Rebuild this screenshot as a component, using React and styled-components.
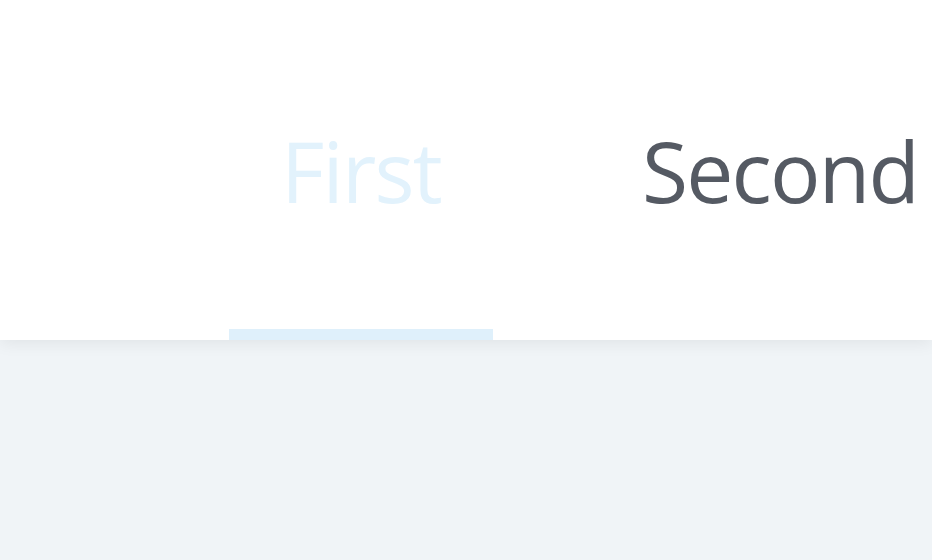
import React, { useState } from 'react';
import styled, { createGlobalStyle } from 'styled-components';

const GlobalStyle = createGlobalStyle`
  html, body {
    margin: 0;
    padding: 0;
    background: #f0f4f7;
    overflow: hidden;
  }
`;

const tabs = ['First', 'Second'];

const App = () => {
  const [active, setActive] = useState(0);

  return (
    <>
      <GlobalStyle />
      <Page>
        <Header>
          <TabList>
            {tabs.map((t, i) => (
              <Tab key={t} $active={i === active} onClick={() => setActive(i)}>
                {t}
              </Tab>
            ))}
          </TabList>
        </Header>
      </Page>
    </>
  );
};

export default App;

const Page = styled.div`
  width: 932px;
  height: 560px;
  background: #f0f4f7;
`;

const Header = styled.div`
  height: 340px;
  background: #ffffff;
  box-shadow: 0 3px 16px rgba(0, 0, 0, 0.07);
  position: relative;
  z-index: 1;
`;

const TabList = styled.div`
  display: flex;
  height: 100%;
  padding-left: 229px;
  gap: 97px;
  white-space: nowrap;
`;

const Tab = styled.button`
  display: flex;
  align-items: center;
  flex-shrink: 0;
  height: 100%;
  padding: 12px 52px 0;
  box-sizing: border-box;
  border: none;
  border-bottom: 11px solid ${(p) => (p.$active ? '#dff0fb' : 'transparent')};
  background: none;
  font-family: 'Open Sans', 'Noto Sans', sans-serif;
  font-size: 84px;
  letter-spacing: -1.8px;
  line-height: 1;
  color: ${(p) => (p.$active ? '#e2f2fc' : '#555a63')};
  cursor: pointer;
`;
